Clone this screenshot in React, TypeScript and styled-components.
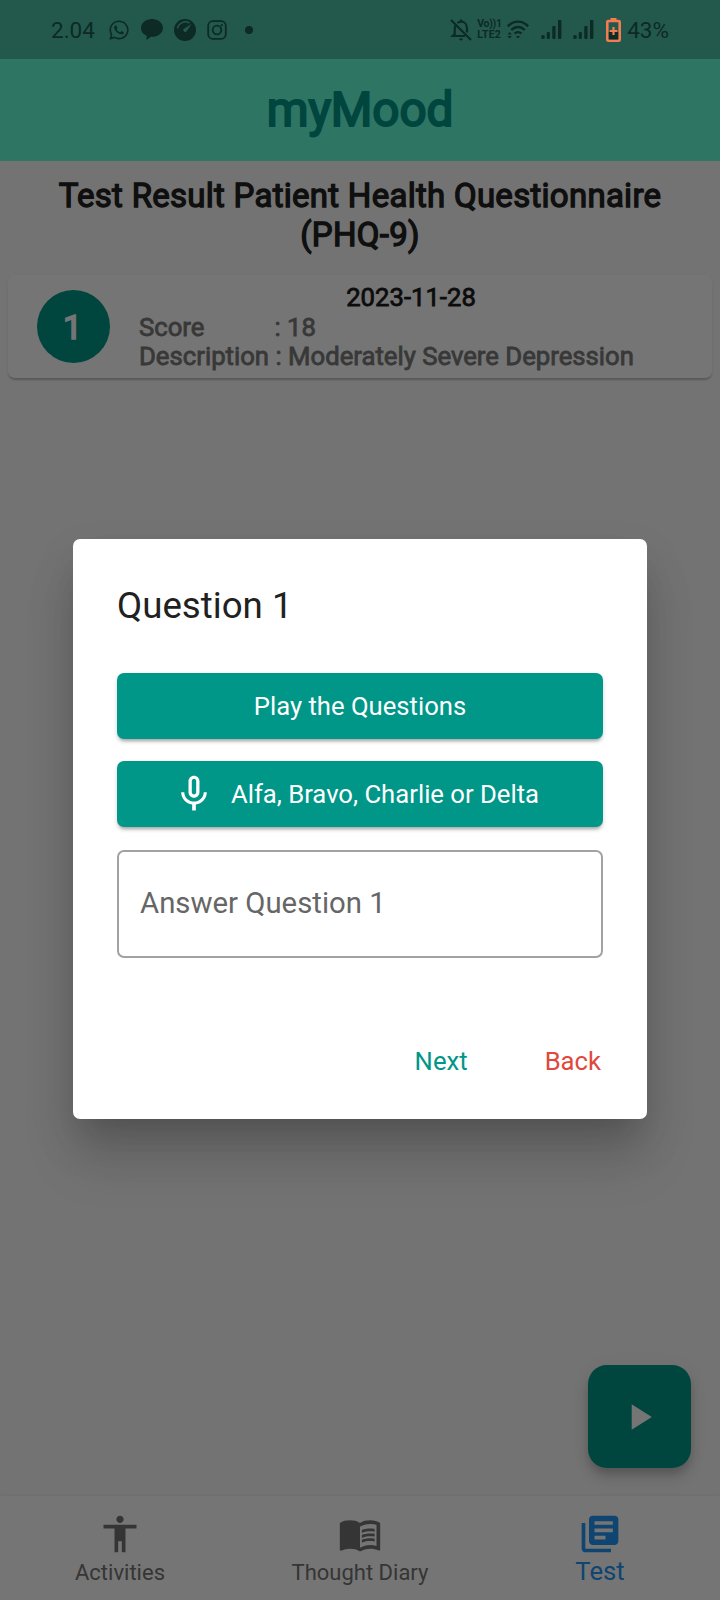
import React from "react";
import styled, { createGlobalStyle } from "styled-components";
import { MdAccessibility, MdMenuBook, MdLibraryBooks, MdMicNone, MdPlayArrow } from "react-icons/md";
import { FaWhatsapp } from "react-icons/fa";

const Global = createGlobalStyle`
  * { box-sizing: border-box; }
  body { margin: 0; font-family: Roboto, "Liberation Sans", sans-serif; }
  button, input { font: inherit; border: 0; margin: 0; }
`;

const Screen = styled.div`
  position: relative;
  display: flex;
  flex-direction: column;
  width: 720px;
  height: 1600px;
  overflow: hidden;
  background: #fafafa;
`;

const StatusBar = styled.header`
  position: relative;
  z-index: 2;
  display: flex;
  justify-content: space-between;
  align-items: center;
  height: 59px;
  padding: 0 51px;
  background: #23594c;
  color: #0d2a24;
  font-size: 22.5px;
  svg { display: block; flex: none; }
`;

const StatusGroup = styled.div<{ $gap: number }>`
  display: flex;
  align-items: center;
  gap: ${(p) => p.$gap}px;
`;

const StatusText = styled.span`
  line-height: 26px;
`;

const Clock = styled(StatusText)`
  width: 46px;
`;

const Volte = styled.span`
  display: flex;
  flex-direction: column;
  width: 25px;
  font-size: 10.5px;
  font-weight: 700;
  line-height: 10.5px;
  white-space: nowrap;
`;

const VolteLine = styled.span<{ $spacing: number }>`
  letter-spacing: ${(p) => p.$spacing}px;
`;

const AppBar = styled.div`
  display: flex;
  align-items: center;
  justify-content: center;
  height: 102px;
  background: #64ffda;
  color: #009688;
`;

const Brand = styled.h1`
  margin: 0;
  font-size: 47.67px;
  font-weight: 400;
  line-height: 56px;
  letter-spacing: -0.1px;
  -webkit-text-stroke: 2px currentColor;
`;

const Main = styled.main`
  flex: 1;
  padding: 15px 8px 0;
`;

const Heading = styled.h2`
  width: 640px;
  margin: 0 auto;
  font-size: 33px;
  font-weight: 400;
  line-height: 39px;
  letter-spacing: 0.27px;
  text-align: center;
  color: #212121;
  -webkit-text-stroke: 1.3px currentColor;
`;

const ResultCard = styled.section`
  display: flex;
  align-items: center;
  gap: 29px;
  height: 103px;
  margin-top: 21px;
  padding: 0 29px;
  border-radius: 7px;
  background: #fff;
  box-shadow: 0 3px 2px -1px rgba(0, 0, 0, 0.16), 0 2px 2px rgba(0, 0, 0, 0.05), 0 2px 4px rgba(0, 0, 0, 0.04);
`;

const Avatar = styled.div`
  display: grid;
  place-items: center;
  flex: none;
  width: 73px;
  height: 73px;
  padding-right: 2px;
  border-radius: 50%;
  background: #009688;
  color: #fff;
  font-size: 34px;
  -webkit-text-stroke: 1.6px currentColor;
`;

const ResultBody = styled.div`
  flex: 1;
  padding-top: 2px;
  font-size: 25.7px;
  line-height: 29.5px;
  color: #7b7b7b;
  -webkit-text-stroke: 0.8px currentColor;
`;

const ResultDate = styled.div`
  text-align: center;
  color: #1c1c1c;
`;

const ResultRow = styled.div`
  display: flex;
`;

const ResultLabel = styled.span<{ $width: number }>`
  width: ${(p) => p.$width}px;
`;

const Fab = styled.button`
  position: absolute;
  right: 29px;
  bottom: 132px;
  display: grid;
  place-items: center;
  width: 103px;
  height: 103px;
  padding: 0 2px 0 0;
  border-radius: 19px;
  background: #009688;
  color: #fff;
  box-shadow: 0 6px 8px -2px rgba(0, 0, 0, 0.14), 0 10px 14px rgba(0, 0, 0, 0.12), 0 3px 20px rgba(0, 0, 0, 0.06);
`;

const NavBar = styled.nav`
  display: flex;
  height: 104px;
  background: #fff;
  box-shadow: 0 -1px 3px rgba(0, 0, 0, 0.06);
`;

const NavItem = styled.a<{ $active?: boolean }>`
  flex: 1;
  display: flex;
  flex-direction: column;
  align-items: center;
  gap: ${(p) => (p.$active ? 0 : 2)}px;
  padding-top: 16px;
  color: ${(p) => (p.$active ? "#2196f3" : "#757575")};
  font-size: ${(p) => (p.$active ? 25.7 : 22)}px;
  line-height: 30px;
`;

const Scrim = styled.div`
  position: absolute;
  inset: 0;
  display: flex;
  justify-content: center;
  align-items: flex-start;
  padding-top: 539px;
  background: rgba(0, 0, 0, 0.54);
`;

const Dialog = styled.div`
  display: flex;
  flex-direction: column;
  width: 574px;
  height: 580px;
  padding: 45px 44px 44px;
  border-radius: 7px;
  background: #fff;
  box-shadow: 0 20px 27px -13px rgba(0, 0, 0, 0.14), 0 42px 52px 0 rgba(0, 0, 0, 0.13), 0 22px 50px 2px rgba(0, 0, 0, 0.08);
`;

const DialogTitle = styled.h3`
  margin: 0 0 45px;
  font-size: 36.67px;
  font-weight: 400;
  line-height: 44px;
  color: #212121;
`;

const FilledButton = styled.button<{ $withIcon?: boolean }>`
  display: flex;
  flex: none;
  align-items: center;
  justify-content: center;
  gap: 15px;
  height: 66px;
  margin-bottom: 22px;
  padding: 0 ${(p) => (p.$withIcon ? 9 : 0)}px 0 0;
  border-radius: 7px;
  background: #009688;
  color: #fff;
  font-size: 25.67px;
  box-shadow: 0 4px 3px -2px rgba(0, 0, 0, 0.2), 0 3px 4px rgba(0, 0, 0, 0.12), 0 2px 5px rgba(0, 0, 0, 0.06);
`;

const AnswerInput = styled.input`
  flex: none;
  height: 108px;
  margin-top: 1px;
  padding: 0 21px 2px;
  border: 2px solid #a2a2a2;
  border-radius: 7px;
  outline: 0;
  background: transparent;
  font-size: 29.33px;
  &::placeholder { color: #666; opacity: 1; }
`;

const Actions = styled.div`
  display: flex;
  justify-content: flex-end;
  gap: 77px;
  margin-top: 87px;
  padding-right: 2px;
`;

const TextButton = styled.button<{ $color: string }>`
  padding: 0;
  background: none;
  color: ${(p) => p.$color};
  font-size: 25.67px;
  line-height: 32px;
`;

const ChatIcon = () => (
  <svg width="22" height="22" viewBox="0 0 22 22" fill="currentColor">
    <path d="M11 0C5 0 0 3.900 0 9c0 3.700 2.400 6.400 5.800 7.800L5.300 21l4.700-3.200c6.500.3 12-3.400 12-8.800C22 3.900 17 0 11 0z" />
  </svg>
);

const GaugeIcon = () => (
  <svg width="22" height="22" viewBox="0 0 22 22">
    <circle cx="11" cy="11" r="11" fill="currentColor" />
    <path d="M3.500 9.500A8 8 0 0 1 15.500 4" fill="none" stroke="#23594c" strokeWidth="1.500" />
    <path d="M17.500 5 12.500 12.500a2 2 0 0 1-3-2.500z" fill="#23594c" />
  </svg>
);

const CameraIcon = () => (
  <svg width="20" height="20" viewBox="0 0 20 20" fill="none" stroke="currentColor" strokeWidth="1.800">
    <rect x="1.200" y="1.200" width="17.600" height="17.600" rx="4.500" />
    <circle cx="10" cy="10" r="4.300" />
    <circle cx="14.800" cy="5.200" r="1.100" fill="currentColor" stroke="none" />
  </svg>
);

const BellOffIcon = () => (
  <svg width="22" height="22" viewBox="0 0 22 22" fill="none" stroke="currentColor" strokeWidth="2.200">
    <path d="M1 1 21 21" />
    <path d="M5.500 6.500c-.7 1.200-.8 2.500-.8 4V15l-2 2H15M7.500 4C8.700 3 10 2.700 11 2.700c3.700 0 6 3 6 6.500v4.300" />
    <path d="M11 .5v2" />
    <path d="M9 19.500a2 2 0 0 0 4 0z" fill="currentColor" stroke="none" />
  </svg>
);

const WifiIcon = () => (
  <svg width="22" height="20" viewBox="0 0 22 20" fill="none" stroke="currentColor" strokeWidth="2.400">
    <path d="M.8 6.300c6-6.300 14.400-6.300 20.400 0" />
    <path d="M4.300 10c4-4 9.400-4 13.400 0" />
    <path d="M7.600 13.600c2-2 4.800-2 6.800 0" />
    <path d="M11 18.500 8.800 16h4.400z" fill="currentColor" stroke="none" />
    <path d="M.5 14.500 2.700 12l2.200 2.500zM.5 16l2.200 2.500L4.900 16z" fill="currentColor" stroke="none" />
  </svg>
);

const SignalIcon = () => (
  <svg width="21" height="19" viewBox="0 0 21 19" fill="currentColor">
    <circle cx="2" cy="17" r="1.900" />
    <rect x="5.800" y="12" width="3" height="7" rx="1" />
    <rect x="11.300" y="6" width="3.200" height="13" rx="1" />
    <rect x="17" y="0" width="3.400" height="19" rx="1" />
  </svg>
);

const BatteryIcon = () => (
  <svg width="15" height="24" viewBox="0 0 15 24">
    <path d="M4.500 0h6v2.500h-6z" fill="#f57c51" />
    <rect x="1.300" y="3" width="12.400" height="19.700" rx="1" fill="none" stroke="#f57c51" strokeWidth="2.600" />
    <rect x="2.800" y="14" width="9.400" height="7.400" fill="#0d2a24" />
    <path d="M7.500 9v8M3.700 13h7.600" stroke="#f57c51" strokeWidth="2.200" />
  </svg>
);

const Dot = styled.i`
  width: 8px;
  height: 8px;
  margin-left: 7px;
  border-radius: 50%;
  background: currentColor;
`;

const NAV_ITEMS = [
  { label: "Activities", icon: MdAccessibility },
  { label: "Thought Diary", icon: MdMenuBook },
  { label: "Test", icon: MdLibraryBooks, active: true },
];

export default function App() {
  return (
    <Screen>
      <Global />
      <StatusBar>
        <StatusGroup $gap={11}>
          <Clock>2.04</Clock>
          <FaWhatsapp size={22} />
          <ChatIcon />
          <GaugeIcon />
          <CameraIcon />
          <Dot />
        </StatusGroup>
        <StatusGroup $gap={11.5}>
          <StatusGroup $gap={5}>
            <BellOffIcon />
            <Volte>
              <VolteLine $spacing={-0.3}>Vo))1</VolteLine>
              <VolteLine $spacing={0.2}>LTE2</VolteLine>
            </Volte>
            <WifiIcon />
          </StatusGroup>
          <SignalIcon />
          <SignalIcon />
          <StatusGroup $gap={6.5}>
            <BatteryIcon />
            <StatusText>43%</StatusText>
          </StatusGroup>
        </StatusGroup>
      </StatusBar>
      <AppBar>
        <Brand>myMood</Brand>
      </AppBar>
      <Main>
        <Heading>Test Result Patient Health Questionnaire (PHQ-9)</Heading>
        <ResultCard>
          <Avatar>1</Avatar>
          <ResultBody>
            <ResultDate>2023-11-28</ResultDate>
            <ResultRow>
              <ResultLabel $width={135.5}>Score</ResultLabel>
              <span>: 18</span>
            </ResultRow>
            <ResultRow>
              <ResultLabel $width={136.5}>Description</ResultLabel>
              <span>: Moderately Severe Depression</span>
            </ResultRow>
          </ResultBody>
        </ResultCard>
      </Main>
      <NavBar>
        {NAV_ITEMS.map(({ label, icon: Icon, active }) => (
          <NavItem key={label} $active={active}>
            <Icon size={44} />
            {label}
          </NavItem>
        ))}
      </NavBar>
      <Fab aria-label="Start test">
        <MdPlayArrow size={44} />
      </Fab>
      <Scrim>
        <Dialog role="dialog">
          <DialogTitle>Question 1</DialogTitle>
          <FilledButton>Play the Questions</FilledButton>
          <FilledButton $withIcon>
            <MdMicNone size={44} />
            Alfa, Bravo, Charlie or Delta
          </FilledButton>
          <AnswerInput placeholder="Answer Question 1" />
          <Actions>
            <TextButton $color="#009688">Next</TextButton>
            <TextButton $color="#e0483e">Back</TextButton>
          </Actions>
        </Dialog>
      </Scrim>
    </Screen>
  );
}
